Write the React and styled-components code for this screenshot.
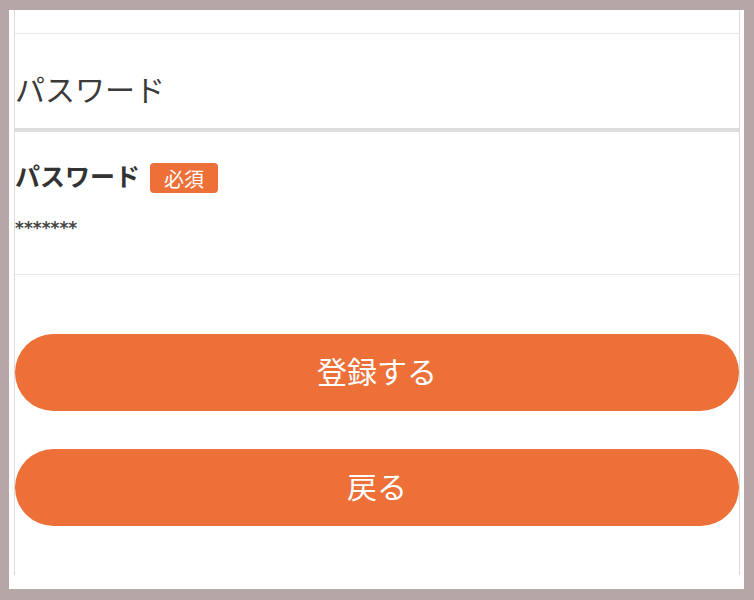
import React from 'react';
import styled, { createGlobalStyle } from 'styled-components';

const GlobalStyle = createGlobalStyle`
  html, body {
    margin: 0;
    padding: 0;
    background: #b5a6a8;
  }
  body {
    font-family: "Noto Sans CJK JP", "Noto Sans", sans-serif;
    color: #333;
  }
`;

const Frame = styled.div`
  padding: 10px 10px 11px 9px;
  height: 600px;
  box-sizing: border-box;
`;

const Sheet = styled.div`
  background: #fff;
  height: 100%;
  padding: 0 4px 14px 5px;
  box-sizing: border-box;
`;

const Panel = styled.div`
  border-left: 1px solid #dcdcdc;
  border-right: 1px solid #dcdcdc;
  height: 100%;
  box-sizing: border-box;
  display: flex;
  flex-direction: column;
`;

const TopRow = styled.div`
  height: 23px;
  border-bottom: 1px solid #e8e8e8;
`;

const SectionTitle = styled.h2`
  margin: 0;
  padding: 34px 0 20px;
  font-size: 30px;
  line-height: 40px;
  font-weight: 400;
  color: #3a3a3a;
  border-bottom: 4px solid #dddddd;
`;

const Field = styled.div`
  padding: 27px 0 36px;
  border-bottom: 1px solid #e8e8e8;
`;

const LabelRow = styled.div`
  display: flex;
  align-items: center;
  height: 32px;
`;

const Label = styled.span`
  font-size: 25px;
  font-weight: 700;
  color: #333;
`;

const Badge = styled.span`
  margin-left: 10px;
  margin-top: 6px;
  height: 30px;
  padding: 0 14px;
  display: inline-flex;
  align-items: center;
  background: #ed7039;
  color: #fff;
  font-size: 20px;
  border-radius: 4px;
`;

const Value = styled.div`
  margin-top: 27px;
  font-family: "DejaVu Sans", sans-serif;
  font-size: 17px;
  font-weight: 700;
  line-height: 20px;
  color: #444;
`;

const Actions = styled.div`
  padding-top: 59px;
  display: flex;
  flex-direction: column;
  gap: 38px;
`;

const PillButton = styled.button`
  height: 77px;
  width: 100%;
  padding: 0 0 5px;
  border: none;
  border-radius: 40px;
  background: #ed7039;
  color: #fff;
  font-family: "Noto Sans CJK JP", sans-serif;
  font-size: 30px;
  cursor: pointer;
`;

export default function App() {
  return (
    <>
      <GlobalStyle />
      <Frame>
        <Sheet>
          <Panel>
            <TopRow />
            <SectionTitle>パスワード</SectionTitle>
            <Field>
              <LabelRow>
                <Label>パスワード</Label>
                <Badge>必須</Badge>
              </LabelRow>
              <Value>*******</Value>
            </Field>
            <Actions>
              <PillButton>登録する</PillButton>
              <PillButton>戻る</PillButton>
            </Actions>
          </Panel>
        </Sheet>
      </Frame>
    </>
  );
}
